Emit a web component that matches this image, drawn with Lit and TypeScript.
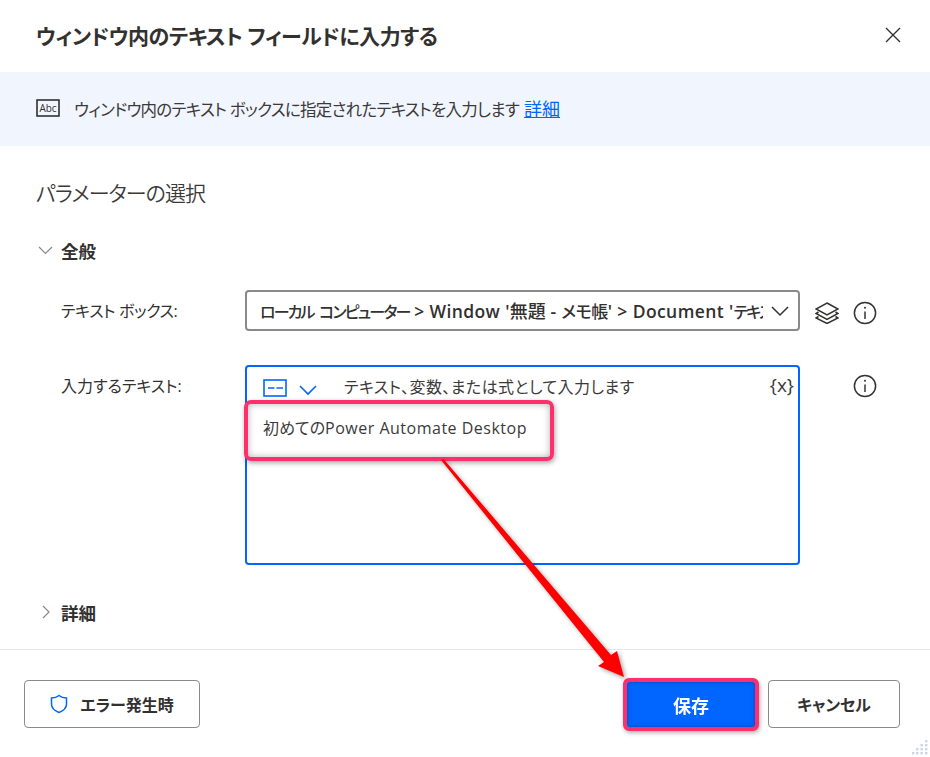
import { LitElement, html, css, svg } from "lit";
import { customElement } from "lit/decorators.js";

const info = html`<svg class="ic" width="24" height="24" viewBox="0 0 24 24" fill="none" stroke="#333" stroke-width="1.5"><circle cx="12" cy="12" r="10.6"/><path d="M12 10.5v7.500"/><circle cx="12" cy="6.800" r="1" fill="#333" stroke="none"/></svg>`;

const grip = [
  [15, 0], [10.5, 4], [15, 4], [6, 8], [10.5, 8], [15, 8], [2, 12], [6, 12], [10.5, 12], [15, 12],
].map(([x, y]) => svg`<rect x=${x} y=${y} width="2.4" height="2.4" fill="#ccd5e4"/>`);

@customElement("app-root")
export class AppRoot extends LitElement {
  static styles = css`
    :host {
      display: flex;
      flex-direction: column;
      position: relative;
      width: 930px;
      height: 757px;
      overflow: hidden;
      background: #fff;
      color: #323130;
      font-family: "Open Sans", "Noto Sans CJK JP", sans-serif;
      font-feature-settings: "palt";
      font-size: 16px;
    }
    .header {
      flex: none;
      box-sizing: border-box;
      height: 72px;
      display: flex;
      align-items: center;
      justify-content: space-between;
      padding: 0 28px 2px 36px;
    }
    .title { font-size: 21px; font-weight: 600; letter-spacing: -0.47px; color: #323130; }
    .banner {
      flex: none;
      box-sizing: border-box;
      height: 74px;
      background: #f1f5fe;
      display: flex;
      align-items: center;
      gap: 14px;
      padding: 0 36px 2px;
      color: #3b3a39;
    }
    .banner .text { font-size: 16.5px; letter-spacing: -0.72px; }
    .banner a { color: #0066ff; text-decoration: underline; margin-left: 5px; font-size: 18px; letter-spacing: 0; }
    .body { flex: 1; display: flex; flex-direction: column; padding: 31px 0 0 36px; }
    .section { font-size: 21px; letter-spacing: -0.95px; font-weight: 350; line-height: 32px; color: #3b3a39; }
    .group {
      display: flex;
      align-items: center;
      gap: 7px;
      height: 24px;
      font-size: 17.5px;
      font-weight: 600;
      color: #323130;
    }
    .general { margin-top: 29px; }
    .row { display: flex; margin-left: 25px; }
    .label { width: 184px; flex: none; line-height: 24px; }
    .label.tight { letter-spacing: -0.4px; }
    .select {
      box-sizing: border-box;
      width: 555px;
      height: 41px;
      flex: none;
      border: 2px solid #8a8a8a;
      border-radius: 4px;
      display: flex;
      align-items: center;
      padding: 0 8px 0 13px;
      gap: 7px;
      font-weight: 500;
      font-size: 18px;
    }
    .select .val { flex: 1; overflow: hidden; white-space: nowrap; margin-top: -2px; }
    .k { letter-spacing: -1.85px; word-spacing: 3px; font-size: 16px; }
    .m { letter-spacing: -0.5px; font-size: 17px; }
    .l { letter-spacing: 0.4px; font-size: 17.5px; font-weight: 600; }
    .select-row { margin-top: 28px; align-items: center; }
    .side { display: flex; align-items: center; gap: 14px; margin: 4px 0 0 15px; }
    .input-row { margin-top: 34px; }
    .input-row .label { padding-top: 9px; }
    .area {
      box-sizing: border-box;
      width: 555px;
      height: 200px;
      flex: none;
      border: 2px solid #0066ff;
      border-radius: 4px;
      padding: 0 4px 0 16px;
      display: flex;
      flex-direction: column;
    }
    .tools { display: flex; align-items: center; height: 37px; padding-bottom: 2px; }
    .tools .hint { margin-left: 26px; flex: 1; color: #3b3a39; letter-spacing: 0.42px; }
    .tools .fx { font-size: 19px; color: #3b3a39; margin-top: -2px; }
    .tools .box { margin-top: 4px; }
    .tools .drop { margin: 8px 0 0 11px; }
    .value { margin-top: 10px; line-height: 24px; color: #3b3a39; }
    .value .en { letter-spacing: 0.5px; }
    .info-side { align-self: flex-start; margin: 0 0 0 53px; padding-top: 9px; }
    .details { margin-top: 35px; }
    .footer {
      flex: none;
      height: 108px;
      box-sizing: border-box;
      border-top: 1px solid #e8e8e8;
      display: flex;
      align-items: flex-start;
      padding: 30px 30px 0 24px;
    }
    button {
      box-sizing: border-box;
      height: 48px;
      border: 1px solid #8a8a8a;
      border-radius: 4px;
      background: #fff;
      font: inherit;
      font-weight: 600;
      color: #323130;
      display: flex;
      align-items: center;
      justify-content: center;
      gap: 12px;
    }
    .err { width: 176px; }
    .spacer { flex: 1; }
    .save {
      width: 128px;
      height: 45px;
      margin: 2px 13px 0 0;
      background: #0066ff;
      border: none;
      color: #fff;
      font-size: 18px;
      box-shadow: inset 0 0 4px #0048b8;
      outline: 4px solid #ff2e6c;
      outline-offset: 0;
      border-radius: 2px;
      filter: drop-shadow(1px 2px 2px rgba(0, 0, 0, 0.3));
    }
    .cancel { width: 132px; }
    .mark {
      position: absolute;
      left: 244px;
      top: 400px;
      width: 310px;
      height: 61px;
      box-sizing: border-box;
      border: 4px solid #ff2e6c;
      border-radius: 7px;
      box-shadow: 1px 2px 5px rgba(0, 0, 0, 0.35), inset 0 0 7px rgba(0, 0, 0, 0.3);
    }
    .arrow {
      position: absolute;
      left: 0;
      top: 0;
      pointer-events: none;
      filter: drop-shadow(2px 2px 2px rgba(0, 0, 0, 0.35));
    }
    .grip { position: absolute; right: 2px; bottom: 2px; }
  `;

  render() {
    return html`
      <div class="header">
        <div class="title">ウィンドウ内のテキスト フィールドに入力する</div>
        <svg width="18" height="18" viewBox="0 0 18 18" stroke="#323130" stroke-width="1.4"><path d="M2 2l14 14M16 2L2 16"/></svg>
      </div>
      <div class="banner">
        <svg width="24" height="18" viewBox="0 0 24 18" fill="none"><rect x="1" y="1" width="22" height="16" stroke="#323130" stroke-width="1.6"/><text x="12" y="13" text-anchor="middle" font-size="10" fill="#323130" font-family="Open Sans">Abc</text></svg>
        <span class="text">ウィンドウ内のテキスト ボックスに指定されたテキストを入力します<a href="#">詳細</a></span>
      </div>
      <div class="body">
        <div class="section">パラメーターの選択</div>
        <div class="group general">
          <svg width="18" height="16" viewBox="0 0 18 16" fill="none" stroke="#8a8a8a" stroke-width="1.2"><path d="M3 5l6.500 6.500L16 5"/></svg>
          全般
        </div>
        <div class="row select-row">
          <div class="label tight">テキスト ボックス:</div>
          <div class="select">
            <span class="val"><span class="k">ローカル コンピューター</span> <span class="l">&gt; Window '</span>無題 <span class="l">-</span> <span class="m">メモ帳</span><span class="l">' &gt; Document '</span><span class="k">テキスト エディター</span></span>
            <svg width="20" height="20" viewBox="0 0 20 20" fill="none" stroke="#323130" stroke-width="1.5"><path d="M2 6l8 8 8-8"/></svg>
          </div>
          <div class="side">
            <svg width="24" height="22" viewBox="0 0 24 22" fill="none" stroke="#323130" stroke-width="1.5"><path d="M12 1l11 6-11 6L1 7z"/><path d="M3.500 10L1 11.500l11 6 11-6L20.500 10"/><path d="M3.500 14.500L1 16l11 5.500L23 16l-2.500-1.500"/></svg>
            ${info}
          </div>
        </div>
        <div class="row input-row">
          <div class="label">入力するテキスト:</div>
          <div class="area">
            <div class="tools">
              <svg class="box" width="24" height="18" viewBox="0 0 24 18" fill="none" stroke="#0066ff" stroke-width="1.6"><rect x="1" y="1" width="22" height="16"/><path d="M5 9h6.500M13.500 9H20"/></svg>
              <svg class="drop" width="20" height="12" viewBox="0 0 20 12" fill="none" stroke="#0066ff" stroke-width="1.600"><path d="M2 2l8 8 8-8"/></svg>
              <span class="hint">テキスト、変数、または式として入力します</span>
              <span class="fx">{x}</span>
            </div>
            <div class="value">初めての<span class="en">Power Automate Desktop</span></div>
          </div>
          <div class="side info-side">${info}</div>
        </div>
        <div class="group details">
          <svg width="18" height="16" viewBox="0 0 18 16" fill="none" stroke="#8a8a8a" stroke-width="1.2"><path d="M7 2l6 6-6 6"/></svg>
          詳細
        </div>
      </div>
      <div class="footer">
        <button class="err">
          <svg width="18" height="20" viewBox="0 0 18 20" fill="none" stroke="#0066ff" stroke-width="1.5"><path d="M9 1.500c2 1.600 4.500 2.400 7.500 2.500v6c0 4-3 6.800-7.500 8.500C4.500 16.800 1.500 14 1.500 10V4C4.500 3.900 7 3.100 9 1.500z"/></svg>
          エラー発生時
        </button>
        <div class="spacer"></div>
        <button class="save">保存</button>
        <button class="cancel">キャンセル</button>
      </div>
      <div class="mark"></div>
      <svg class="arrow" width="930" height="757"><polygon points="441,460 443.500,459 611,655 617,651 624,677 598,666 604,662" fill="#ff0000"/></svg>
      <svg class="grip" width="18" height="15">${grip}</svg>
    `;
  }
}
